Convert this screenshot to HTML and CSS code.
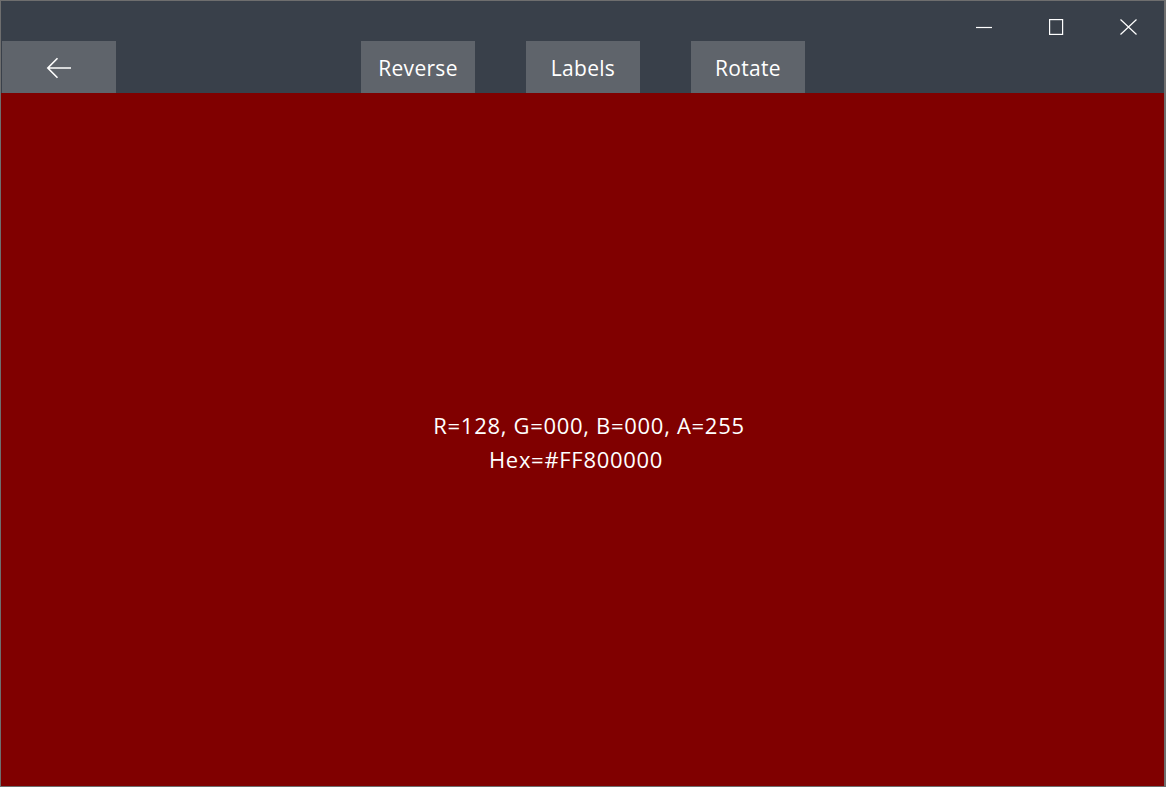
FILE: index.html
```html
<!DOCTYPE html>
<html>
<head>
<meta charset="utf-8">
<link rel="stylesheet" href="styles.css">
</head>
<body>
<div class="window">
  <header class="header">
    <div class="caption-row">
      <div class="caption-btn">
        <svg width="16" height="16" viewBox="0 0 16 16"><path d="M0 8.5H16" stroke="#fff" stroke-width="1.2" fill="none"/></svg>
      </div>
      <div class="caption-btn">
        <svg width="16" height="16" viewBox="0 0 16 16"><rect x="1.6" y="0.6" width="13" height="14.8" stroke="#fff" stroke-width="1.2" fill="none"/></svg>
      </div>
      <div class="caption-btn">
        <svg width="17" height="16" viewBox="0 0 17 16"><path d="M0.5 0.5L16.5 15.5M16.5 0.5L0.5 15.5" stroke="#fff" stroke-width="1.2" fill="none"/></svg>
      </div>
    </div>
    <div class="toolbar">
      <div class="tb-btn back">
        <svg width="26" height="22" viewBox="0 0 26 22"><path d="M25 11H2M11.5 1.2L1.8 11L11.5 20.8" stroke="#fff" stroke-width="1.6" fill="none"/></svg>
      </div>
      <div class="tb-btn reverse">Reverse</div>
      <div class="tb-btn">Labels</div>
      <div class="tb-btn">Rotate</div>
    </div>
  </header>
  <main class="canvas">
    <div class="info">
      <div class="line1">R=128, G=000, B=000, A=255</div>
      <div class="line2">Hex=#FF800000</div>
    </div>
  </main>
</div>
</body>
</html>
```
FILE: styles.css
```css
html, body {
  margin: 0;
  padding: 0;
  height: 100%;
}
body {
  font-family: "Open Sans", "Noto Sans", sans-serif;
  color: #fff;
  background: #3a4048;
}
.window {
  box-sizing: border-box;
  height: 787px;
  width: 1166px;
  border: 1px solid #6e6e6e;
  border-right-width: 2px;
  display: flex;
  flex-direction: column;
}
.header {
  background: #39404a;
  height: 92px;
  display: flex;
  flex-direction: column;
}
.caption-row {
  height: 40px;
  display: flex;
  justify-content: flex-end;
}
.caption-btn {
  width: 72px;
  height: 40px;
  display: flex;
  justify-content: center;
  padding-top: 18px;
  box-sizing: border-box;
}
.toolbar {
  height: 52px;
  display: flex;
  padding-left: 1px;
}
.tb-btn {
  width: 114px;
  height: 52px;
  background: #5f646b;
  display: flex;
  align-items: center;
  justify-content: center;
  font-size: 21px;
  letter-spacing: 0.3px;
  margin-right: 51px;
  padding-top: 2px;
  box-sizing: border-box;
}
.tb-btn.back {
  margin-right: 245px;
  padding-top: 2px;
}
.canvas {
  flex: 1;
  background: #800000;
  display: flex;
  align-items: center;
  justify-content: center;
}
.info {
  text-align: center;
  font-size: 22px;
  letter-spacing: 0.7px;
  line-height: 34px;
  margin-top: 4px;
  margin-left: 13px;
}
.line2 {
  padding-right: 26px;
}
```
